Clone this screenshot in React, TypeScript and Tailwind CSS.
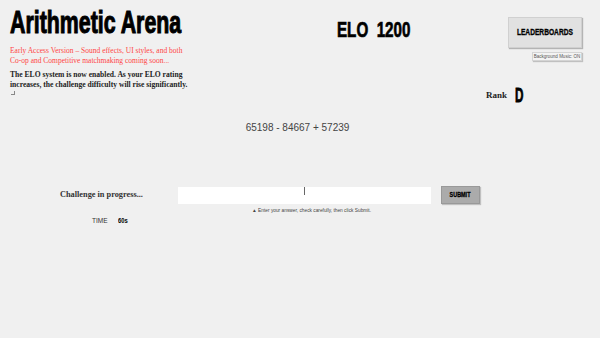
import React from "react";

const heavy = "font-['Liberation_Sans','Arial',sans-serif] font-black";
const serif = "font-['Liberation_Serif','Times_New_Roman',serif]";
const sans = "font-['Liberation_Sans','Arial',sans-serif]";

export default function App() {
  return (
    <div className="w-[600px] h-[338px] bg-[#f0f0f0] overflow-hidden flex flex-col">
      {/* header */}
      <div className="flex items-start">
        <div className="w-[200px] pl-[10px] flex flex-col">
          <h1
            className={`${heavy} mt-[6px] h-[32px] text-[32px] leading-[32px] text-black [-webkit-text-stroke:1.1px_black] whitespace-nowrap`}
          >
            <span className="inline-block origin-left scale-x-[0.667]">Arithmetic Arena</span>
          </h1>
          <p className={`${serif} mt-[8px] text-[7.5px] leading-[10px] text-[#ff4545] whitespace-nowrap`}>
            Early Access Version – Sound effects, UI styles, and both
            <br />
            Co-op and Competitive matchmaking coming soon...
          </p>
          <p className={`${serif} mt-[4px] text-[7.6px] leading-[10px] font-bold text-[#222] whitespace-nowrap`}>
            The ELO system is now enabled. As your ELO rating
            <br />
            increases, the challenge difficulty will rise significantly.
          </p>
          <div className="mt-[1px] ml-[1px] w-[4px] h-[4px] border-r border-b border-[#888]" />
        </div>

        <div
          className={`${heavy} ml-[137px] mt-[19px] text-[22px] leading-[22px] text-black [-webkit-text-stroke:0.7px_black] whitespace-pre`}
        >
          <span className="inline-block origin-left scale-x-[0.69]">{"ELO  1200"}</span>
        </div>

        <div className="ml-auto mr-[18px] w-[96px] flex flex-col">
          <div className="flex flex-col items-end">
            <button
              className={`${heavy} mt-[17px] w-[74px] h-[31px] bg-[#e1e1e1] border border-[#d0d0d0] shadow-[1px_1px_1px_rgba(0,0,0,0.25)] text-[8.5px] text-black [-webkit-text-stroke:0.3px_black] whitespace-nowrap`}
            >
              <span className="inline-block scale-x-[0.78]">LEADERBOARDS</span>
            </button>
            <button
              className={`${sans} mt-[4px] w-[50px] h-[9px] bg-[#f3f3f3] border border-[#d4d4d4] shadow-[1px_1px_1px_rgba(0,0,0,0.2)] text-[4.5px] leading-[7px] text-[#555] whitespace-nowrap`}
            >
              Background Music: ON
            </button>
          </div>
          <div className="mt-[25px] flex items-center">
            <span className={`${serif} text-[9px] leading-[19px] font-bold text-[#222]`}>Rank</span>
            <span
              className={`${heavy} ml-[8px] text-[19.5px] leading-[19px] text-black [-webkit-text-stroke:0.8px_black]`}
            >
              <span className="inline-block origin-left scale-x-[0.6]">D</span>
            </span>
          </div>
        </div>
      </div>

      {/* equation */}
      <div className={`${sans} mt-[17px] text-center text-[10px] leading-[12px] text-[#444] pr-[5px]`}>
        65198 - 84667 + 57239
      </div>

      {/* answer row */}
      <div className="mt-[52px] flex items-center pl-[60px]">
        <span className={`${serif} w-[118px] text-[8.3px] font-bold text-[#333] whitespace-nowrap`}>
          Challenge in progress...
        </span>
        <div className="w-[253px] h-[17px] bg-white flex justify-center">
          <div className="w-[1px] h-[8px] bg-[#666]" />
        </div>
        <button
          className={`${heavy} ml-[10px] w-[39px] h-[18px] bg-[#ababab] border border-[#999] shadow-[1px_1px_1px_rgba(0,0,0,0.2)] text-[6.8px] text-black [-webkit-text-stroke:0.3px_black]`}
        >
          <span className="inline-block scale-x-[0.8]">SUBMIT</span>
        </button>
      </div>

      <div className={`${sans} mt-[4px] ml-[252px] text-[4.8px] leading-[6px] text-[#444] whitespace-nowrap`}>
        ▲ Enter your answer, check carefully, then click Submit.
      </div>

      <div className="mt-[3px] ml-[92px] flex items-center">
        <span className={`${sans} text-[6.5px] leading-[8px] text-[#333] font-light`}>TIME</span>
        <span className={`${heavy} ml-[10px] text-[6.5px] leading-[8px] text-black`}>
          <span className="inline-block origin-left scale-x-[0.9]">60s</span>
        </span>
      </div>
    </div>
  );
}
